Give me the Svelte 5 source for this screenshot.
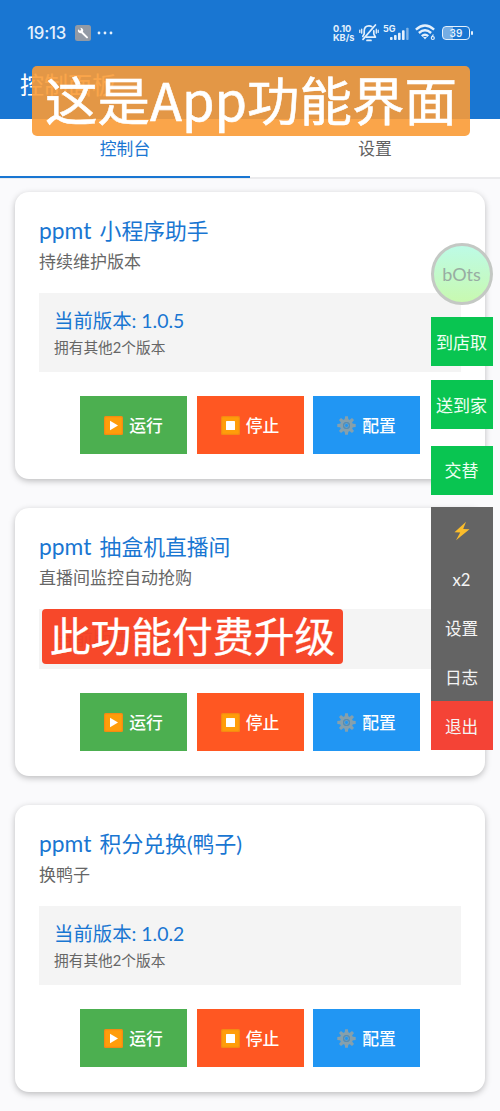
<script lang="ts">
  interface Script {
    name: string;
    desc: string;
    version: string;
    others: string;
  }

  const scripts: Script[] = [
    { name: '小程序助手', desc: '持续维护版本', version: '当前版本: 1.0.5', others: '拥有其他2个版本' },
    { name: '抽盒机直播间', desc: '直播间监控自动抢购', version: '当前版本: 1.0', others: '' },
    { name: '积分兑换(鸭子)', desc: '换鸭子', version: '当前版本: 1.0.2', others: '拥有其他2个版本' },
  ];

  const tabs = ['控制台', '设置'];
  let activeTab = $state(0);

  const modes = ['到店取', '送到家', '交替'];
  const tools = ['x2', '设置', '日志'];
  const teeth = [0, 45, 90, 135, 180, 225, 270, 315];
</script>

<div class="screen">
  <header>
    <div class="status">
      <div class="status-left">
        <span class="clock">19:13</span>
        <svg width="16" height="16" viewBox="0 0 16 16">
          <rect width="16" height="16" rx="2.5" fill="#929aa5" />
          <path d="M6.5 7 L12 12.4" stroke="#fff" stroke-width="2" stroke-linecap="round" />
          <path d="M3.2 4.2 a2.7 2.7 0 1 0 2.2 -1.4 L6.2 5 L4.8 5.8 Z" fill="#fff" />
        </svg>
        <svg width="16" height="4" viewBox="0 0 16 4" fill="#e4f0fc">
          <circle cx="2" cy="2" r="1.4" /><circle cx="8" cy="2" r="1.4" /><circle cx="14" cy="2" r="1.4" />
        </svg>
      </div>
      <div class="status-right">
        <div class="speed"><span>0.10</span><span>KB/s</span></div>
        <svg class="bell" width="20" height="18" viewBox="0 0 20 18" fill="none" stroke="#e4f0fc" stroke-width="1.7" stroke-linecap="round" stroke-linejoin="round">
          <path d="M12.8 2.6 C12 2 11 1.8 10 1.8 C7 1.8 5.2 4 5.2 7 V9.8 L3.8 12.4" />
          <path d="M14.8 6.8 V9.8 L16.4 13.2 H7.4" />
          <path d="M16.4 1 L4 15.4 M8 16.4 H12" />
          <path d="M2.7 5.2 V9.2 M.8 6.2 V8.4 M17.3 5.2 V9.2 M19.2 6.2 V8.4" stroke-width="1.3" />
        </svg>
        <div class="cell">
          <span>5G</span>
          <svg width="19" height="13" viewBox="0 0 19 13" fill="#e4f0fc">
            <rect x="0" y="10" width="2.6" height="3" rx=".8" />
            <rect x="4" y="8" width="2.6" height="5" rx=".8" />
            <rect x="8" y="5.8" width="2.6" height="7.2" rx=".8" />
            <rect x="12" y="3.2" width="2.6" height="9.8" rx=".8" />
            <rect x="16.2" y=".8" width="2.4" height="12.2" rx=".8" opacity=".5" />
          </svg>
        </div>
        <svg class="wifi" width="21" height="17" viewBox="0 0 21 17" fill="none" stroke="#e4f0fc" stroke-width="2.4">
          <path d="M.9 5.6 Q10 -2.4 19.1 5.6 M3.9 9 Q10 3.6 16.1 9 M6.8 12.2 Q10 9.2 13.2 12.2" />
          <path d="M8 13 L10 15.5 L12 13 Z" fill="#e4f0fc" stroke="none" />
          <path d="M18.4 10.5 L16.8 13" stroke-width="1.2" />
          <circle cx="17.8" cy="14" r="1.5" stroke-width="1.2" />
        </svg>
        <div class="battery">39</div>
      </div>
    </div>
    <h1>控制面板</h1>
  </header>

  <nav>
    {#each tabs as tab, i}
      <button class="tab" class:active={activeTab === i} onclick={() => (activeTab = i)}>{tab}</button>
    {/each}
  </nav>

  <main>
    {#each scripts as script}
      <section class="card">
        <h2><span class="prefix">ppmt</span> {script.name}</h2>
        <p class="desc">{script.desc}</p>
        <div class="version">
          <div class="current">{script.version}</div>
          {#if script.others}
            <div class="others">{script.others}</div>
          {/if}
        </div>
        <div class="actions">
          <button class="run">
            <svg width="19" height="19" viewBox="0 0 19 19">
              <rect width="19" height="19" rx="1.5" fill="#f58a13" />
              <rect x="1.2" y="1.2" width="16.6" height="16.6" rx="1" fill="#ff9d0a" />
              <path d="M6 4.8 L14 9.5 L6 14.2 Z" fill="#fff" />
            </svg>
            运行
          </button>
          <button class="stop">
            <svg width="19" height="19" viewBox="0 0 19 19">
              <rect width="19" height="19" rx="1.5" fill="#f58a13" />
              <rect x="1.2" y="1.2" width="16.6" height="16.6" rx="1" fill="#ff9d0a" />
              <rect x="5" y="5" width="9" height="9" rx=".6" fill="#fff" />
            </svg>
            停止
          </button>
          <button class="config">
            <svg width="19" height="19" viewBox="0 0 19 19">
              {#each teeth as angle}
                <path d="M8.1 .3 H10.9 L11.5 4.4 H7.5 Z" fill="#86a0ac" transform="rotate({angle} 9.5 9.5)" />
              {/each}
              <circle cx="9.5" cy="9.5" r="5" fill="none" stroke="#86a0ac" stroke-width="3" />
              <circle cx="9.5" cy="9.5" r="3" fill="#5b9fd0" stroke="#6f8793" stroke-width="1" />
              <circle cx="9.5" cy="9.5" r="1.4" fill="#2196f3" />
            </svg>
            配置
          </button>
        </div>
      </section>
    {/each}
  </main>

  <aside class="floating">
    <div class="bots">bOts</div>
    <div class="modes">
      {#each modes as mode}
        <button class="mode">{mode}</button>
      {/each}
    </div>
    <div class="tools">
      <button>
        <svg width="18" height="20" viewBox="0 0 18 20">
          <path d="M13 .8 L1.5 11.2 L7.2 11.4 L3 19.2 L16.5 8.3 L10.2 8 Z" fill="#fbbd2b" />
        </svg>
      </button>
      {#each tools as tool}
        <button>{tool}</button>
      {/each}
      <button class="exit">退出</button>
    </div>
  </aside>

  <div class="caption caption-top">这是App功能界面</div>
  <div class="caption caption-paid">此功能付费升级</div>
</div>

<style>
  :global(body) {
    margin: 0;
    background: #fafafc;
  }

  .screen {
    position: relative;
    width: 500px;
    height: 1111px;
    overflow: hidden;
    background: #fafafc;
    font-family: Lato, 'Noto Sans CJK SC', sans-serif;
  }

  .screen * {
    box-sizing: border-box;
  }

  button {
    border: none;
    padding: 0;
    margin: 0;
    font-family: inherit;
    cursor: pointer;
  }

  header {
    height: 119px;
    background: #1976d2;
    color: #fff;
  }

  .status {
    display: flex;
    justify-content: space-between;
    height: 65px;
    padding: 0 30px 0 27px;
    color: #e4f0fc;
    font-family: Inter, sans-serif;
  }

  .status-left,
  .status-right {
    display: flex;
    align-items: center;
  }

  .clock {
    width: 41px;
    margin-right: 7px;
    font-size: 16.8px;
    font-weight: 500;
    letter-spacing: -0.2px;
  }

  .status-left svg + svg {
    margin-left: 6px;
  }

  .speed {
    display: flex;
    flex-direction: column;
    width: 26px;
    font-size: 9.2px;
    font-weight: 700;
    line-height: 9px;
  }

  .cell {
    display: flex;
    align-items: flex-end;
    margin-left: 4px;
    height: 15px;
  }

  .cell span {
    align-self: flex-start;
    width: 12px;
    margin-right: -5px;
    font-size: 9px;
    font-weight: 700;
    line-height: 8px;
  }

  .wifi {
    margin-left: 6px;
  }

  .battery {
    position: relative;
    width: 28px;
    height: 14px;
    margin-left: 6px;
    border: 1.5px solid #e4f0fc;
    border-radius: 4px;
    background: linear-gradient(to right, #75ade4 38%, transparent 38%);
    font-size: 10px;
    font-weight: 600;
    line-height: 12px;
    text-align: center;
  }

  .battery::after {
    content: '';
    position: absolute;
    right: -4px;
    top: 4px;
    width: 2px;
    height: 4px;
    border-radius: 1px;
    background: #e4f0fc;
  }

  h1 {
    margin: 0;
    padding-left: 20px;
    font-size: 24px;
    font-weight: 400;
    line-height: 40px;
  }

  nav {
    display: flex;
    height: 60px;
    background: #fff;
    border-bottom: 2px solid #ebebed;
  }

  .tab {
    flex: 1;
    height: 59px;
    background: none;
    border-bottom: 2.5px solid transparent;
    color: #616161;
    font-size: 16.8px;
    line-height: 59px;
  }

  .tab.active {
    border-bottom-color: #1976d2;
    color: #1976d2;
  }

  main {
    display: flex;
    flex-direction: column;
    gap: 30px;
    padding: 13px 15px 0;
  }

  .card {
    padding: 24px 24px 24.5px;
    border-radius: 14px;
    background: #fff;
    box-shadow: 0 2px 6px rgba(0, 0, 0, 0.25);
  }

  .card + .card {
    margin-top: -0.5px;
  }

  h2 {
    margin: 0;
    color: #1976d2;
    font-size: 21.8px;
    font-weight: 400;
    line-height: 30px;
    white-space: nowrap;
  }

  .prefix {
    display: inline-block;
    width: 55px;
    font-size: 22.8px;
    line-height: 28px;
  }

  .desc {
    margin: 2px 0 17px;
    color: #666;
    font-size: 17px;
    line-height: 28px;
  }

  .version {
    padding: 13px 15px 14px;
    background: #f4f4f4;
  }

  .current {
    color: #1976d2;
    font-size: 19.4px;
    line-height: 30px;
  }

  .others {
    color: #666;
    font-size: 14.7px;
    line-height: 22px;
  }

  .version:not(:has(.others)) {
    padding: 15px;
  }

  .actions {
    display: flex;
    justify-content: center;
    gap: 9.5px;
    margin-top: 24px;
  }

  .actions button {
    display: flex;
    align-items: center;
    justify-content: center;
    gap: 6px;
    width: 107px;
    height: 58px;
    color: #fff;
    font-size: 16.8px;
    font-weight: 500;
  }

  .run {
    background: #4caf50;
  }

  .stop {
    background: #ff5722;
  }

  .config {
    background: #2196f3;
  }

  .floating {
    position: absolute;
    top: 243px;
    right: 7.5px;
    width: 62px;
  }

  .bots {
    height: 62px;
    border: 3px solid #c4c8c4;
    border-radius: 50%;
    background: linear-gradient(#bdfbe6, #c8f9b0);
    color: #98aca2;
    font-size: 18px;
    line-height: 57px;
    text-align: center;
  }

  .modes {
    display: flex;
    flex-direction: column;
    gap: 14px;
    margin-top: 12px;
  }

  .mode {
    height: 49px;
    padding-bottom: 1px;
    background: #09c551;
    color: #effff3;
    font-size: 17px;
  }

  .mode:last-child {
    margin-top: 2.5px;
  }

  .tools {
    display: flex;
    flex-direction: column;
    margin-top: 12.5px;
    background: #646464;
  }

  .tools button {
    display: flex;
    align-items: center;
    justify-content: center;
    height: 48.6px;
    background: none;
    color: #f4f4f4;
    font-size: 16.6px;
  }

  .tools .exit {
    background: #f44336;
  }

  .caption {
    position: absolute;
    color: #fff;
    font-family: 'Noto Sans CJK SC', sans-serif;
    text-align: center;
    white-space: nowrap;
  }

  .caption-top {
    top: 66px;
    left: 32px;
    width: 438px;
    height: 70px;
    border-radius: 5px;
    background: rgba(250, 155, 54, 0.9);
    font-size: 52.5px;
    font-weight: 400;
    line-height: 65px;
    -webkit-text-stroke: 0.6px #fff;
  }

  .caption-paid {
    top: 609px;
    left: 42px;
    width: 301px;
    height: 55px;
    border-radius: 4px;
    background: rgba(247, 65, 33, 0.96);
    font-size: 40.8px;
    font-weight: 400;
    line-height: 52px;
    -webkit-text-stroke: 0.3px #fff;
  }
</style>
